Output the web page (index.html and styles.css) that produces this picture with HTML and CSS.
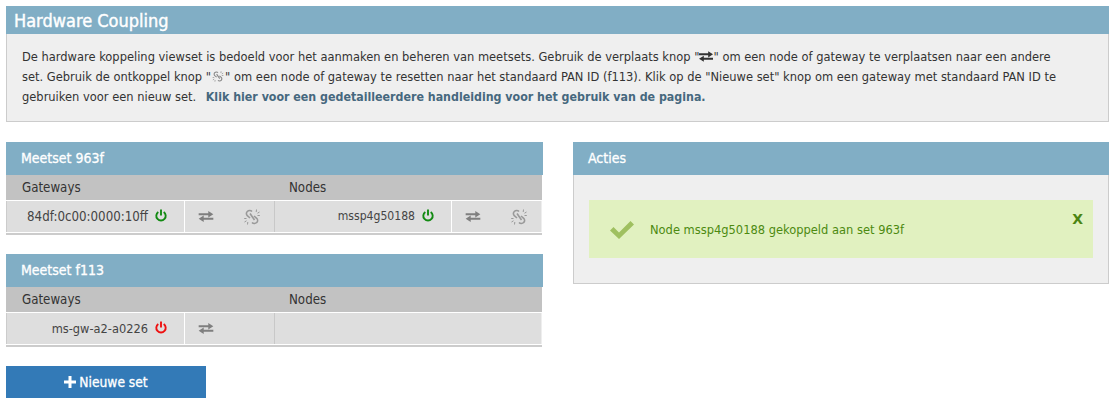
FILE: index.html
```html
<!DOCTYPE html>
<html lang="nl">
<head>
<meta charset="utf-8">
<title>Hardware Coupling</title>
<link rel="stylesheet" href="styles.css">
</head>
<body>
<svg class="defs" width="0" height="0" aria-hidden="true">
  <symbol id="transfer" viewBox="0 0 16 12">
    <path d="M0 2.400h10.500V0L16 3.500 10.500 7V4.600H0zM16 7.400H5.500V5L0 8.500 5.500 12V9.600H16z" fill="currentColor"/>
  </symbol>
  <symbol id="unlink" viewBox="0 0 16 16">
    <path d="M8 2.500C6.800 1.200 4.500 1.300 3.300 2.500 2.100 3.700 2.100 5.500 3.300 6.700L6 9M8 13.500C9.200 14.800 11.500 14.700 12.700 13.500 13.900 12.300 13.900 10.500 12.700 9.300L10 7M6 4.500 10.500 11" fill="none" stroke="currentColor" stroke-width="1.600"/>
    <path d="M12.500.5 12.200 3M15.500 3l-2 1.200M15.800 6.500h-2.300M.2 9.500h2.300M.5 13l2-1.200M3.500 15.500l.3-2.500" stroke="currentColor" stroke-width="1" fill="none"/>
  </symbol>
  <symbol id="power" viewBox="0 0 12 13">
    <path d="M3.300 3A4.700 4.700 0 1 0 8.700 3M6 .5v6" fill="none" stroke="currentColor" stroke-width="1.900"/>
  </symbol>
</svg>
<main class="page">
  <section class="panel intro">
    <h1 class="title">Hardware Coupling</h1>
    <div class="intro-body">
      <p class="intro-text">De hardware koppeling viewset is bedoeld voor het aanmaken en beheren van meetsets. Gebruik de verplaats knop "<svg class="inline-icon dark"><use href="#transfer"/></svg>" om een node of gateway te verplaatsen naar een andere<br>set. Gebruik de ontkoppel knop "<svg class="inline-icon"><use href="#unlink"/></svg>" om een node of gateway te resetten naar het standaard PAN ID (f113). Klik op de "Nieuwe set" knop om een gateway met standaard PAN ID te<br>gebruiken voor een nieuw set. <a class="manual" href="#">Klik hier voor een gedetailleerdere handleiding voor het gebruik van de pagina.</a></p>
    </div>
  </section>
  <div class="columns">
    <div class="left">
      <section class="set">
        <h2 class="heading">Meetset 963f</h2>
        <div class="rows">
          <div class="labels"><span>Gateways</span><span>Nodes</span></div>
          <div class="devices">
            <div class="name hex">84df:0c00:0000:10ff<svg class="power on"><use href="#power"/></svg></div>
            <div class="tools"><svg class="move"><use href="#transfer"/></svg><svg class="cut"><use href="#unlink"/></svg></div>
            <div class="name node">mssp4g50188<svg class="power on"><use href="#power"/></svg></div>
            <div class="tools"><svg class="move"><use href="#transfer"/></svg><svg class="cut"><use href="#unlink"/></svg></div>
          </div>
        </div>
      </section>
      <section class="set">
        <h2 class="heading">Meetset f113</h2>
        <div class="rows">
          <div class="labels"><span>Gateways</span><span>Nodes</span></div>
          <div class="devices">
            <div class="name">ms-gw-a2-a0226<svg class="power off"><use href="#power"/></svg></div>
            <div class="tools"><svg class="move"><use href="#transfer"/></svg></div>
            <div class="name empty"></div>
            <div class="tools"></div>
          </div>
        </div>
      </section>
      <button class="new-set" type="button"><svg class="plus" viewBox="0 0 12 12"><path d="M4.500 0h3v4.500H12v3H7.500V12h-3V7.500H0v-3h4.500z" fill="currentColor"/></svg>Nieuwe set</button>
    </div>
    <section class="panel actions">
      <h2 class="heading">Acties</h2>
      <div class="actions-body">
        <div class="message">
          <svg class="check" viewBox="0 0 24 19"><path d="M0 10.500 3.500 7l5.500 5.500L20.500 1 24 4.500 9 19z" fill="currentColor"/></svg>
          <span class="message-text">Node mssp4g50188 gekoppeld aan set 963f</span>
          <span class="close">X</span>
        </div>
      </div>
    </section>
  </div>
</main>
</body>
</html>
```
FILE: styles.css
```css
* { box-sizing: border-box; }
body { margin: 0; background: #fff; color: #333; font-family: "DejaVu Sans Condensed", "DejaVu Sans", sans-serif; font-size: 12.750px; }
.defs { position: absolute; }
.page { padding: 6px 7px 0 6px; }
.panel { background: #efefef; border: 1px solid #ccc; border-top: 0; }
.title { margin: 0 -1px; height: 28px; padding: 0 8px; background: #81aec5; color: #fff; font-size: 18px; font-weight: 400; -webkit-text-stroke: .4px #fff; line-height: 29px; }
.intro-body { padding: 13px 0 0 15px; height: 87px; }
.intro-text { margin: 0; line-height: 20px; white-space: nowrap; }
.inline-icon { width: 14px; height: 11px; vertical-align: -1px; color: #888; }
.inline-icon.dark { color: #333; }
.manual { margin-left: 6px; color: #46687e; font-size: 12.300px; font-weight: 700; text-decoration: none; }
.columns { display: grid; grid-template-columns: 537px 536px; gap: 30px; margin-top: 20px; }
.left { display: flex; flex-direction: column; align-items: flex-start; }
.set { width: 100%; margin-bottom: 19px; }
.rows { margin-right: 1px; border-bottom: 2px solid #ccc; }
.heading { margin: 0; height: 33px; padding: 0 15px; background: #81aec5; color: #fff; font-size: 14px; font-weight: 400; -webkit-text-stroke: .3px #fff; line-height: 33px; }
.labels { display: grid; grid-template-columns: 267px 1fr; height: 25px; padding: 0 16px; background: #c2c2c2; line-height: 25px; font-size: 13.200px; }
.labels span { color: #333; }
.devices { display: grid; grid-template-columns: 177px 90px 177px 88px; height: 33px; padding-left: 2px; background: #dedede; border: solid #fff; border-width: 1px 0; box-shadow: inset 1px 0 0 #ccc, inset -1px 0 0 #eee; }
.name { display: flex; align-items: center; justify-content: flex-end; gap: 7px; padding: 0 17px 1px 0; border-right: 1px solid #fff; font-size: 12.700px; color: #444; }
.name.hex { font-size: 13.200px; }
.name.node { font-size: 12.100px; }
.name.empty { border-right: 0; }
.tools { display: flex; align-items: center; gap: 30px; padding-left: 13px; border-right: 1px solid #c8c8c8; color: #7f7f7f; }
.tools:last-child { border-right: 0; }
.power { width: 12px; height: 13px; margin-top: -1px; }
.on { color: #128a12; }
.off { color: #ee1111; }
.move { width: 16px; height: 11px; }
.cut { width: 16px; height: 16px; color: #999; }
.new-set { display: flex; align-items: center; justify-content: center; gap: 3px; width: 200px; height: 32px; border: 0; background: #337ab7; color: #fff; font-family: inherit; font-size: 13.700px; font-weight: 400; -webkit-text-stroke: .3px #fff; }
.plus { width: 12px; height: 12px; }
.actions { align-self: start; height: 142px; }
.actions .heading { margin: 0 -1px; }
.actions-body { padding: 25px 15px; }
.message { position: relative; display: flex; align-items: center; gap: 16px; height: 58px; padding: 1px 0 0 21px; background: #e1f1c0; color: #4c8a10; font-size: 12.750px; }
.check { width: 24px; height: 19px; color: #9fc060; }
.close { position: absolute; top: 11px; right: 10px; font-family: "DejaVu Sans", sans-serif; font-size: 14px; font-weight: 700; color: #4b8512; }
```
